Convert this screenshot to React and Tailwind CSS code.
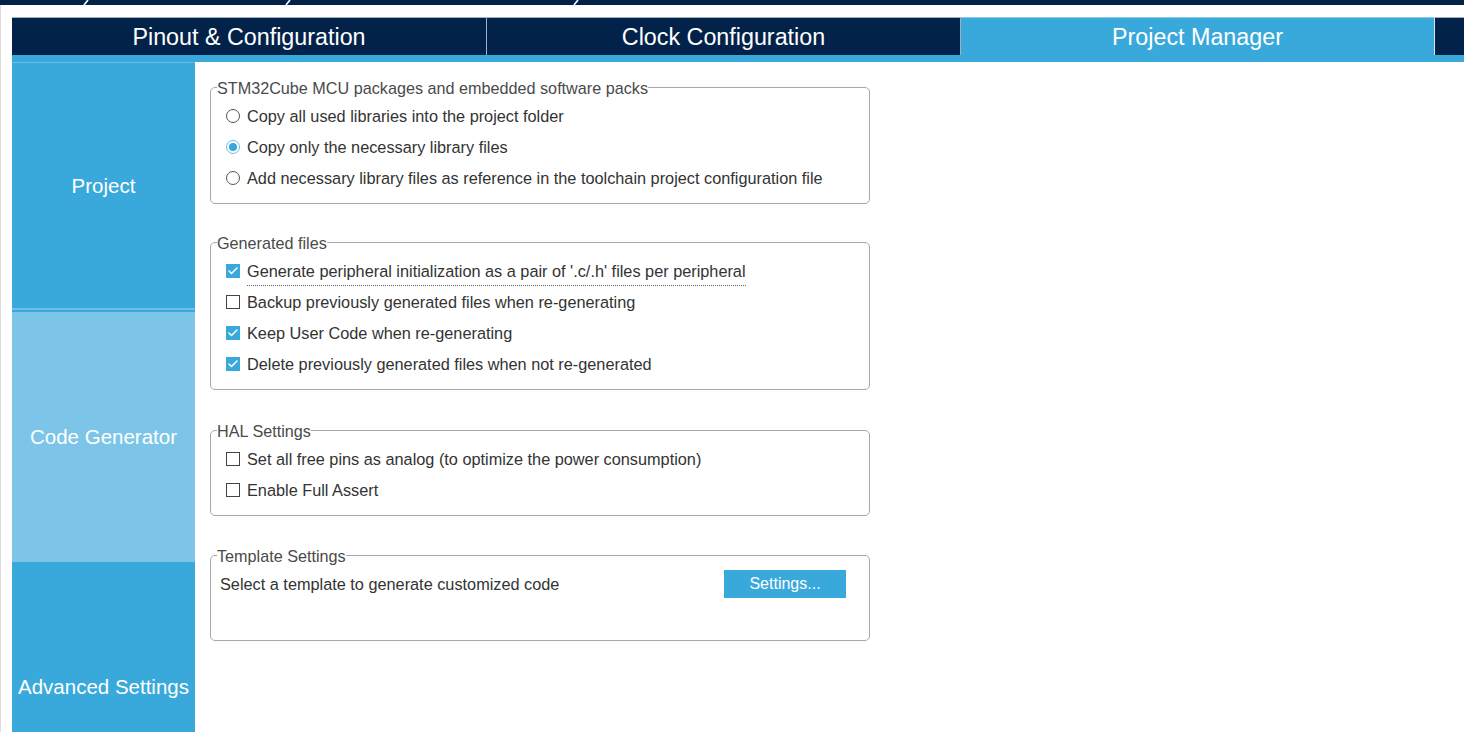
import { Check } from 'lucide-react';

const NAVY = 'bg-[#03224a]';

function Radio({ checked, label }) {
    return (
        <div className="flex h-[31px] items-center">
            <span
                className={`flex h-[14px] w-[14px] items-center justify-center rounded-full border bg-white ${
                    checked ? 'border-[#6cbde4]' : 'border-[#555]'
                }`}
            >
                {checked && <span className="h-[8px] w-[8px] rounded-full bg-[#39a9dc]" />}
            </span>
            <span className="ml-[7px] pt-[1px]">{label}</span>
        </div>
    );
}

function CheckBox({ checked, label, focused }) {
    return (
        <div className="flex h-[31px] items-center">
            {checked ? (
                <span className="flex h-[14px] w-[14px] items-center justify-center bg-[#39a9dc]">
                    <Check size={12} strokeWidth={3} className="text-white" />
                </span>
            ) : (
                <span className="h-[14px] w-[14px] border border-[#444] bg-white" />
            )}
            <span
                className={`ml-[7px] ${
                    focused ? 'mt-[4px] border-b border-dotted border-[#666] pb-[1px]' : 'pt-[1px]'
                }`}
            >
                {label}
            </span>
        </div>
    );
}

function Group({ title, className = '', children, pad = 'pl-[15px] pb-[10px]' }) {
    return (
        <fieldset className={`w-[660px] rounded-[5px] border border-[#a8a8a8] ${className}`}>
            <legend className="ml-[6px] pt-[1px] text-[16.2px] leading-[18px] text-[#4a4a4a]">{title}</legend>
            <div className={`pt-[3px] ${pad}`}>{children}</div>
        </fieldset>
    );
}

export default function App() {
    return (
        <div className="h-screen w-full overflow-hidden bg-white font-['Liberation_Sans',Arial,sans-serif]">
            {/* breadcrumb remnants */}
            <div className={`h-[5px] w-full ${NAVY}`}>
                <svg width="1464" height="5" className="block">
                    <line x1="88" y1="0" x2="84" y2="5" stroke="white" strokeWidth="1.6" />
                    <line x1="290" y1="0" x2="286" y2="5" stroke="white" strokeWidth="1.6" />
                    <line x1="578" y1="0" x2="574" y2="5" stroke="white" strokeWidth="1.6" />
                </svg>
            </div>

            <div className="h-full border-l border-[#dcdcdc] pl-[11px] pt-[12px]">
                {/* main tabs */}
                <div className="flex h-[38px] text-[23.3px] text-white">
                    <div className={`flex w-[475px] items-center justify-center border-r border-t border-[#9fb0c2] pt-[2px] ${NAVY}`}>
                        Pinout &amp; Configuration
                    </div>
                    <div className={`flex w-[474px] items-center justify-center border-r border-t border-[#9fb0c2] pt-[2px] ${NAVY}`}>
                        Clock Configuration
                    </div>
                    <div className="flex w-[474px] items-center justify-center border-r border-t border-r-[#d8e6f0] border-t-[#8ccbea] bg-[#39a9dc] pt-[2px]">
                        Project Manager
                    </div>
                    <div className={`flex-1 border-t border-[#9fb0c2] ${NAVY}`} />
                </div>
                <div className="h-[7px] bg-[#39a9dc]" />

                <div className="flex">
                    {/* side menu */}
                    <div className="w-[183px] shrink-0 text-[20.5px] text-white">
                        <div className="flex h-[248px] items-center justify-center border-t border-b-2 border-t-[#66bde5] border-b-[#6cc0e8] bg-[#39a9dc] pt-[2px]">
                            Project
                        </div>
                        <div className="flex h-[252px] items-center justify-center border-t-2 border-[#39a9dc] bg-[#7dc5e8]">
                            Code Generator
                        </div>
                        <div className="flex h-[250px] items-center justify-center bg-[#39a9dc]">
                            Advanced Settings
                        </div>
                    </div>

                    {/* settings */}
                    <div className="pl-[15px] pt-[16px] text-[16.3px] text-[#333]">
                        <Group title="STM32Cube MCU packages and embedded software packs">
                            <Radio label="Copy all used libraries into the project folder" />
                            <Radio checked label="Copy only the necessary library files" />
                            <Radio label="Add necessary library files as reference in the toolchain project configuration file" />
                        </Group>

                        <Group title="Generated files" className="mt-[29px]">
                            <CheckBox
                                checked
                                focused
                                label="Generate peripheral initialization as a pair of '.c/.h' files per peripheral"
                            />
                            <CheckBox label="Backup previously generated files when re-generating" />
                            <CheckBox checked label="Keep User Code when re-generating" />
                            <CheckBox checked label="Delete previously generated files when not re-generated" />
                        </Group>

                        <Group title="HAL Settings" className="mt-[31px]">
                            <CheckBox label="Set all free pins as analog (to optimize the power consumption)" />
                            <CheckBox label="Enable Full Assert" />
                        </Group>

                        <Group title="Template Settings" className="mt-[30px]" pad="pl-[9px] pb-[41px]">
                            <div className="flex h-[31px] items-center">
                                <span className="w-[504px] pt-[1px]">Select a template to generate customized code</span>
                                <button
                                    type="button"
                                    className="h-[28px] w-[122px] bg-[#39a9dc] text-[16px] text-white"
                                >
                                    Settings...
                                </button>
                            </div>
                        </Group>
                    </div>
                </div>
            </div>
        </div>
    );
}
